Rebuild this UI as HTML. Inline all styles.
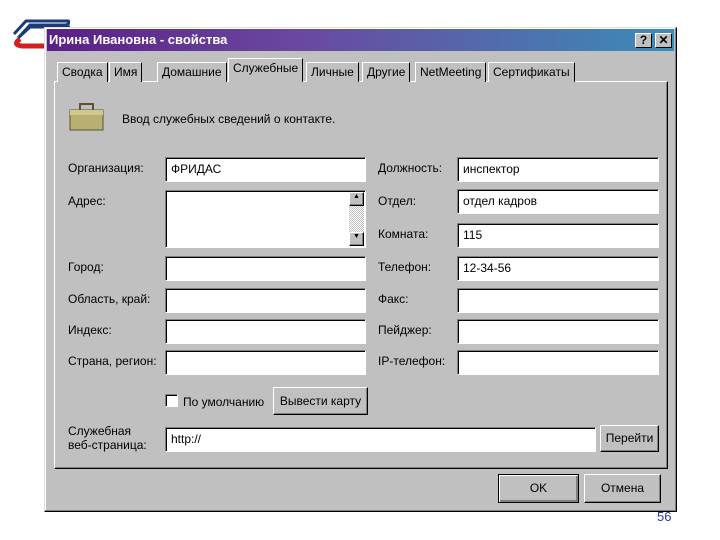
<!DOCTYPE html><html><head><meta charset="utf-8"><style>
*{margin:0;padding:0;box-sizing:border-box}
body{width:720px;height:540px;background:#fff;position:relative;overflow:hidden;font-family:"Liberation Sans",sans-serif;font-size:12px;color:#000}
.a{position:absolute}
.dlg{left:44px;top:27px;width:633px;height:485px;background:#c0c0c0;border:1px solid;border-color:#dfdfdf #000 #000 #dfdfdf;box-shadow:inset -1px -1px #808080,inset 1px 1px #fff}
.title{left:47px;top:29px;width:627px;height:22px;background:linear-gradient(90deg,#5a1f86,#6a48a0 40%,#3b8cb8);color:#fff;font-weight:bold;font-size:13px;line-height:22px;padding-left:2px}
.tb{top:33px;width:17px;height:15px;background:#c0c0c0;border:1px solid;border-color:#fff #000 #000 #fff;font-weight:bold;font-size:12px;line-height:13px;text-align:center;color:#000}
.panel{left:54px;top:81px;width:614px;height:388px;border:1px solid;border-color:#fff #000 #000 #fff;box-shadow:inset -1px -1px #808080}
.tab{top:62px;height:20px;border:1px solid;border-color:#fff #000 transparent #fff;border-bottom:none;line-height:18px;padding:0 4px;font-size:12px;background:#c0c0c0}
.inp{background:#fff;border:1px solid;border-color:#808080 #fff #fff #808080;box-shadow:inset 1px 1px #000;height:25px;padding:4px 5px;font-size:12px}
.lb{font-size:12px}
.btn{background:#c0c0c0;border:1px solid;border-color:#fff #000 #000 #fff;box-shadow:inset -1px -1px #808080;text-align:center;font-size:12px}
</style></head><body>
<svg class="a" style="left:8px;top:14px" width="62" height="36"><path d="M6 20 L18 7 H60 Q64 8 58 11 H22 L12 22" stroke="#1a3a7a" stroke-width="3" fill="none"/><path d="M10 24 L22 13 H62" stroke="#1a3a7a" stroke-width="3" fill="none"/><path d="M12 25 Q4 31 14 32 H62" stroke="#d02020" stroke-width="5" fill="none"/></svg>
<div class="a dlg"></div>
<div class="a title">Ирина Ивановна - свойства</div>
<div class="a tb" style="left:635px">?</div><div class="a tb" style="left:655px">✕</div>
<div class="a panel"></div>
<div class="a tab" style="left:57px">Сводка</div>
<div class="a tab" style="left:109px">Имя</div>
<div class="a tab" style="left:157px">Домашние</div>
<div class="a tab" style="left:228px;top:58px;height:24px;border-bottom:0">Служебные</div>
<div class="a tab" style="left:306px">Личные</div>
<div class="a tab" style="left:362px">Другие</div>
<div class="a tab" style="left:415px">NetMeeting</div>
<div class="a tab" style="left:488px">Сертификаты</div>
<svg class="a" style="left:68px;top:100px" width="38" height="32"><rect x="2" y="10" width="33" height="20" fill="#b8b070" stroke="#5a5430"/><rect x="2" y="10" width="33" height="5" fill="#d0c890"/><path d="M12 10 V4 H25 V10" stroke="#5a5430" stroke-width="2" fill="none"/></svg>
<div class="a lb" style="left:122px;top:112px">Ввод служебных сведений о контакте.</div>
<div class="a lb" style="left:68px;top:161px">Организация:</div>
<div class="a lb" style="left:68px;top:194px">Адрес:</div>
<div class="a lb" style="left:68px;top:260px">Город:</div>
<div class="a lb" style="left:68px;top:292px">Область, край:</div>
<div class="a lb" style="left:68px;top:323px">Индекс:</div>
<div class="a lb" style="left:68px;top:354px">Страна, регион:</div>
<div class="a inp" style="left:165px;top:157px;width:201px">ФРИДАС</div>
<div class="a inp" style="left:165px;top:190px;width:201px;height:58px"></div>
<div class="a" style="left:349px;top:192px;width:15px;height:54px;background:repeating-conic-gradient(#c0c0c0 0 25%,#fff 0 50%) 0 0/2px 2px"></div>
<div class="a btn" style="left:349px;top:192px;width:15px;height:14px;font-size:7px">▲</div>
<div class="a btn" style="left:349px;top:232px;width:15px;height:14px;font-size:7px">▼</div>
<div class="a inp" style="left:165px;top:256px;width:201px"></div>
<div class="a inp" style="left:165px;top:288px;width:201px"></div>
<div class="a inp" style="left:165px;top:319px;width:201px"></div>
<div class="a inp" style="left:165px;top:350px;width:201px"></div>
<div class="a lb" style="left:378px;top:161px">Должность:</div>
<div class="a lb" style="left:378px;top:194px">Отдел:</div>
<div class="a lb" style="left:378px;top:227px">Комната:</div>
<div class="a lb" style="left:378px;top:260px">Телефон:</div>
<div class="a lb" style="left:378px;top:292px">Факс:</div>
<div class="a lb" style="left:378px;top:323px">Пейджер:</div>
<div class="a lb" style="left:378px;top:354px">IP-телефон:</div>
<div class="a inp" style="left:457px;top:157px;width:202px">инспектор</div>
<div class="a inp" style="left:457px;top:189px;width:202px">отдел кадров</div>
<div class="a inp" style="left:457px;top:223px;width:202px">115</div>
<div class="a inp" style="left:457px;top:256px;width:202px">12-34-56</div>
<div class="a inp" style="left:457px;top:288px;width:202px"></div>
<div class="a inp" style="left:457px;top:319px;width:202px"></div>
<div class="a inp" style="left:457px;top:350px;width:202px"></div>
<div class="a inp" style="left:165px;top:394px;width:13px;height:13px;padding:0"></div>
<div class="a lb" style="left:183px;top:395px">По умолчанию</div>
<div class="a btn" style="left:273px;top:387px;width:95px;height:28px;line-height:26px">Вывести карту</div>
<div class="a lb" style="left:68px;top:424px;line-height:14px">Служебная<br>веб-страница:</div>
<div class="a inp" style="left:165px;top:427px;width:431px">http://</div>
<div class="a btn" style="left:600px;top:425px;width:59px;height:27px;line-height:25px">Перейти</div>
<div class="a btn" style="left:498px;top:474px;width:81px;height:29px;line-height:27px;border-color:#000;box-shadow:inset 1px 1px #fff,inset -2px -2px #808080">OK</div>
<div class="a btn" style="left:584px;top:474px;width:77px;height:29px;line-height:27px">Отмена</div>
<div class="a" style="left:657px;top:509px;color:#2a3a9a;font-size:13px">56</div>
</body></html>
